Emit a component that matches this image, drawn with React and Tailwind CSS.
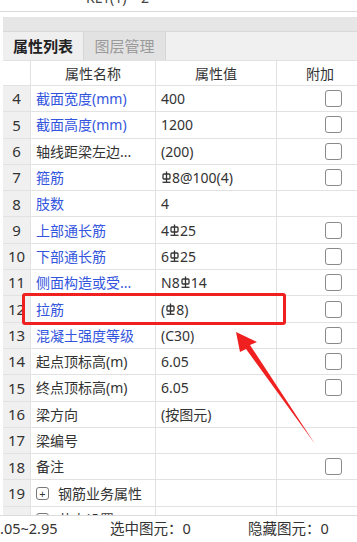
import React from 'react';

const font = { fontFamily: '"Noto Sans", "Noto Sans CJK SC", sans-serif' };

function Gang() {
    return (
        <svg width="9" height="13" viewBox="0 0 9 13" className="inline-block align-[-1px] mx-[1px]">
            <rect x="1" y="3" width="7" height="5" rx="1" fill="none" stroke="#333" strokeWidth="1.3" />
            <line x1="4.5" y1="0.5" x2="4.5" y2="11" stroke="#333" strokeWidth="1.3" />
            <line x1="0.5" y1="11.3" x2="8.5" y2="11.3" stroke="#333" strokeWidth="1.3" />
        </svg>
    );
}

const rows = [
    { n: 4, name: '截面宽度(mm)', blue: true, value: '400', box: true },
    { n: 5, name: '截面高度(mm)', blue: true, value: '1200', box: true },
    { n: 6, name: '轴线距梁左边...', blue: false, value: '(200)', box: true },
    { n: 7, name: '箍筋', blue: true, value: ['', '8@100(4)'], box: true },
    { n: 8, name: '肢数', blue: true, value: '4', box: false },
    { n: 9, name: '上部通长筋', blue: true, value: ['4', '25'], box: true },
    { n: 10, name: '下部通长筋', blue: true, value: ['6', '25'], box: true },
    { n: 11, name: '侧面构造或受...', blue: true, value: ['N8', '14'], box: true },
    { n: 12, name: '拉筋', blue: true, value: ['(', '8)'], box: true },
    { n: 13, name: '混凝土强度等级', blue: true, value: '(C30)', box: true },
    { n: 14, name: '起点顶标高(m)', blue: false, value: '6.05', box: true },
    { n: 15, name: '终点顶标高(m)', blue: false, value: '6.05', box: true },
    { n: 16, name: '梁方向', blue: false, value: '(按图元)', box: false },
    { n: 17, name: '梁编号', blue: false, value: '', box: false },
    { n: 18, name: '备注', blue: false, value: '', box: true },
    { n: 19, name: '钢筋业务属性', blue: false, value: '', box: false, plus: true },
    { n: 20, name: '节点设置', blue: false, value: '', box: false, plus: true },
];

function Value({ v }) {
    if (Array.isArray(v)) {
        return (
            <span>
                {v[0]}
                <Gang />
                {v[1]}
            </span>
        );
    }
    return <span>{v}</span>;
}

export default function App() {
    return (
        <div className="relative w-[357px] h-[542px] overflow-hidden bg-white text-[#333]" style={font}>
            <div className="h-[12px] overflow-hidden border-b border-[#dadada]">
                <div className="-mt-[12px] pl-[86px] text-[14px] leading-[20px] text-[#444]">KL1(1)&nbsp;&nbsp;&nbsp;&nbsp;2</div>
            </div>
            <div className="h-[5px]" />
            <div className="ml-[3px] flex flex-col">
                <div className="h-[15px] bg-[#e6e6e6] border-b border-[#d8d8d8]" />
                <div className="h-[28px] flex bg-[#f0f0f0]">
                    <div className="w-[81px] flex items-center justify-center font-bold text-[15px] text-[#222] bg-[#efefef] border-r border-[#d6d6d6]">属性列表</div>
                    <div className="w-[82px] flex items-center justify-center text-[15px] text-[#9a9a9a] bg-[#e2e2e2] border-r border-[#d6d6d6]">图层管理</div>
                </div>
                <div className="flex h-[26px] border-y border-[#e2e2e2] text-[14px]">
                    <div className="w-[28px] bg-white border-r border-[#e2e2e2]" />
                    <div className="w-[125px] flex items-center justify-center border-r border-[#e2e2e2]">属性名称</div>
                    <div className="w-[121px] flex items-center justify-center border-r border-[#e2e2e2]">属性值</div>
                    <div className="flex-1 flex items-center justify-center pl-[6px]">附加</div>
                </div>
                <div className="h-[429px] overflow-hidden">
                    {rows.map((r) => (
                        <div key={r.n} className="flex h-[26.3px] border-b border-[#e2e2e2] text-[14px]">
                            <div className="w-[28px] flex items-center justify-center bg-[#f0f0f0] border-r border-[#e2e2e2] text-[15px] text-[#333]">{r.n}</div>
                            <div className={'w-[125px] flex items-center pl-[5px] whitespace-nowrap border-r border-[#e2e2e2] ' + (r.blue ? 'text-[#3355dd]' : 'text-[#333]')}>
                                {r.plus && (
                                    <span className="w-[13px] h-[13px] mr-[9px] border border-[#777] rounded-[3px] flex items-center justify-center text-[11px] leading-none">+</span>
                                )}
                                {r.name}
                            </div>
                            <div className="w-[121px] flex items-center pl-[5px] border-r border-[#e2e2e2] whitespace-nowrap">
                                <Value v={r.value} />
                            </div>
                            <div className="flex-1 flex items-center pl-[48px]">
                                {r.box && <div className="w-[17px] h-[17px] border-[1.5px] border-[#8a8a8a] rounded-[3px] bg-white" />}
                            </div>
                        </div>
                    ))}
                </div>
            </div>
            <div className="h-[27px] border-t border-[#dcdcdc] flex items-center text-[14.5px] text-[#333] whitespace-nowrap">
                <span className="w-[110px]">.05~2.95</span>
                <span className="w-[138px]">选中图元：0</span>
                <span>隐藏图元：0</span>
            </div>
            <div className="absolute left-[22px] top-[293px] w-[264px] h-[32px] border-[3px] border-[#f02020] rounded-[3px]" />
            <svg className="absolute left-0 top-0 pointer-events-none" width="357" height="542" viewBox="0 0 357 542">
                <polygon points="236,332 257,342 250,345 315,444 246,349 240,352" fill="#f02020" />
            </svg>
        </div>
    );
}
